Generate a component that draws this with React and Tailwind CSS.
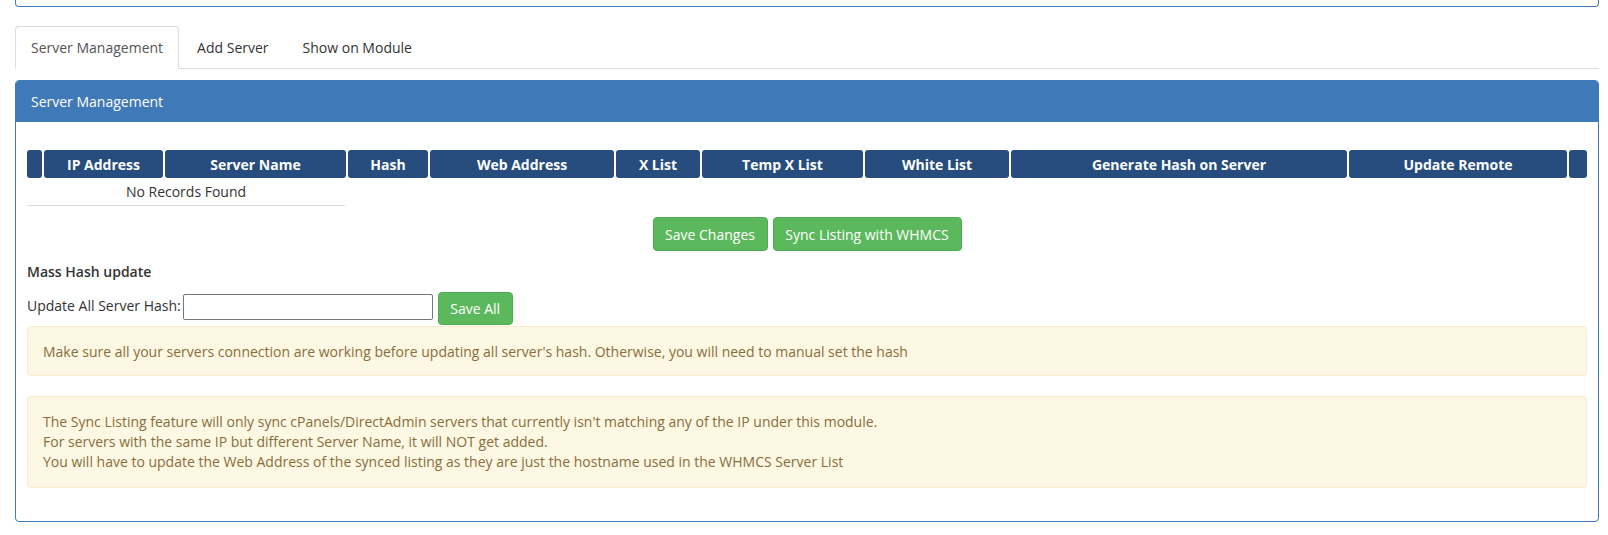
const columns = [
  { label: '', width: 'w-[15px]' },
  { label: 'IP Address', width: 'w-[119px]' },
  { label: 'Server Name', width: 'w-[181px]' },
  { label: 'Hash', width: 'w-[80px]' },
  { label: 'Web Address', width: 'w-[184px]' },
  { label: 'X List', width: 'w-[84px]' },
  { label: 'Temp X List', width: 'w-[161px]' },
  { label: 'White List', width: 'w-[144px]' },
  { label: 'Generate Hash on Server', width: 'w-[336px]' },
  { label: 'Update Remote', width: 'w-[218px]' },
  { label: '', width: 'w-[18px]' },
]

const tabs = ['Server Management', 'Add Server', 'Show on Module']

const App = () => {
  return (
    <div className="h-[535px] w-[1608px] overflow-hidden bg-white text-[14px] text-[#333] font-['Open_Sans',sans-serif]">
      <div className="ml-[15px] h-[7px] w-[1584px] rounded-b-[4px] border border-t-0 border-[#3f79b7]" />

      <div className="ml-[15px] mt-[19px] flex w-[1584px] border-b border-[#ddd]">
        {tabs.map((tab, index) => (
          <div
            key={tab}
            className={
              index === 0
                ? '-mb-px mr-[2px] h-[43px] rounded-t-[4px] border border-[#ddd] border-b-white bg-white px-[15px] pt-[10px] text-[#555]'
                : 'mr-[2px] h-[42px] border border-transparent px-[15px] pt-[10px] text-[#333]'
            }
          >
            {tab}
          </div>
        ))}
      </div>

      <div className="ml-[15px] mt-[11px] h-[442px] w-[1584px] overflow-hidden rounded-[4px] border border-[#3f79b7]">
        <div className="flex h-[41px] items-center bg-[#3f79b7] px-[15px] text-white">Server Management</div>

        <div className="pl-[11px] pr-[11px] pt-[28px]">
          <div className="flex gap-[2px]">
            {columns.map((col, i) => (
              <div
                key={i}
                className={`${col.width} flex h-[28px] shrink-0 items-center justify-center rounded-[3px] bg-[#264d7e] font-bold text-white`}
              >
                {col.label}
              </div>
            ))}
          </div>
          <div className="flex h-[28px] w-[318px] items-center justify-center border-b border-[#ddd]">
            No Records Found
          </div>

          <div className="mt-[11px] flex justify-center gap-[5px]">
            <button className="h-[34px] w-[115px] rounded-[4px] border border-[#4cae4c] bg-[#5cb85c] text-white">Save Changes</button>
            <button className="h-[34px] w-[189px] rounded-[4px] border border-[#4cae4c] bg-[#5cb85c] text-white">Sync Listing with WHMCS</button>
          </div>

          <div className="mt-[11px] font-semibold leading-[20px]">Mass Hash update</div>

          <div className="mt-[10px] flex items-start">
            <span className="mt-[4px] leading-[20px]">Update All Server Hash:</span>
            <input className="ml-[2px] mt-[2px] h-[26px] w-[250px] rounded-[2px] border border-[#767676] bg-white" />
            <button className="ml-[5px] h-[33px] w-[75px] rounded-[4px] border border-[#4cae4c] bg-[#5cb85c] text-white">Save All</button>
          </div>

          <div className="mt-px flex h-[50px] items-center rounded-[4px] border border-[#faebcc] bg-[#fcf8e3] px-[15px] text-[#8a6d3b]">
            Make sure all your servers connection are working before updating all server's hash. Otherwise, you will need to manual set the hash
          </div>

          <div className="mt-[20px] rounded-[4px] border border-[#faebcc] bg-[#fcf8e3] px-[15px] pb-[15px] pt-[15px] leading-[20px] text-[#8a6d3b]">
            <p>The Sync Listing feature will only sync cPanels/DirectAdmin servers that currently isn't matching any of the IP under this module.</p>
            <p>For servers with the same IP but different Server Name, it will NOT get added.</p>
            <p>You will have to update the Web Address of the synced listing as they are just the hostname used in the WHMCS Server List</p>
          </div>
        </div>
      </div>
    </div>
  )
}

export default App
